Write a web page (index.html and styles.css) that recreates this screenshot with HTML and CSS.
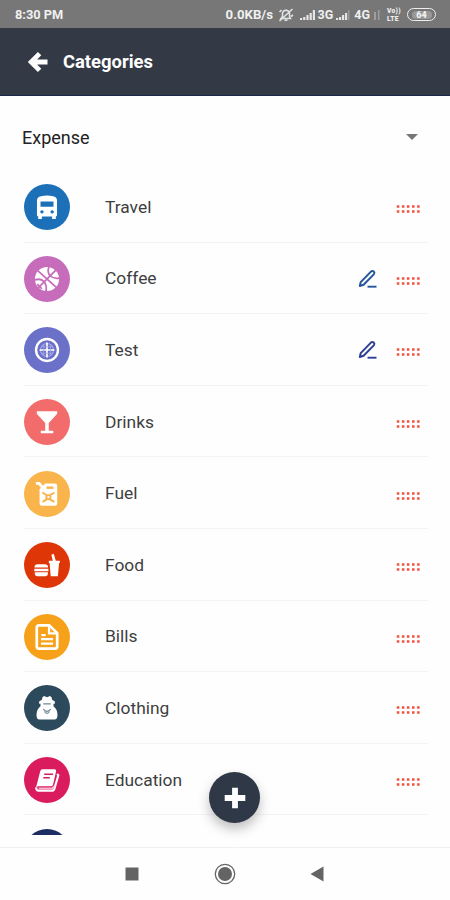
FILE: index.html
```html
<!DOCTYPE html>
<html lang="en">
<head>
    <meta charset="UTF-8">
    <meta name="viewport" content="width=device-width, initial-scale=1.0">
    <title>Categories</title>
    <link rel="stylesheet" href="styles.css">
</head>
<body>

    <!-- Shared symbols -->
    <svg class="symbols" width="0" height="0">
        <symbol id="grip" viewBox="0 0 24 8">
            <path fill="#f2503a" d="M.8.2h2.500v2.500H.8zM5.900.2h2.500v2.500H5.900zM10.900.2h2.500v2.500h-2.500zM16 .2h2.500v2.500H16zM21.100.2h2.500v2.500h-2.500zM.8 5.300h2.500v2.500H.8zM5.900 5.300h2.500v2.500H5.900zM10.900 5.300h2.500v2.500h-2.500zM16 5.300h2.500v2.500H16zM21.100 5.300h2.500v2.500h-2.500z"/>
        </symbol>
        <symbol id="pen" viewBox="0 0 20 20">
            <path d="M1.800 17l.9-3.900L13.200 2.400q1.300-1 2.500.1t.3 2.600L5.600 15.700z" fill="none" stroke="currentColor" stroke-width="2" stroke-linejoin="round"/>
            <path d="M9.500 17.700h9" stroke="currentColor" stroke-width="1.900"/>
        </symbol>
    </svg>

    <div class="phone">
        <!-- Status bar -->
        <div class="status-bar">
            <span class="time">8:30 PM</span>
            <div class="status-icons">
                <span class="speed">0.0KB/s</span>
                <svg class="bell" width="16" height="16" viewBox="0 0 16 16" fill="none" stroke="#e2e2e2" stroke-width="1.600">
                    <path d="M3 11.500h9.500l-1-2V6.200Q11 3.400 8 3.200 4.800 3.400 4.500 6.200v3.300zM6.500 13.300h3M1.500 14L14.500 2M1.500 5l2-2M13 9.500l2-1.500"/>
                </svg>
                <svg class="signal" width="16" height="12" viewBox="0 0 16 12" fill="#e6e6e6">
                    <path d="M0 9h2.200v2H0zM3.200 8h2.200v3H3.200zM6.400 6h2.200v5H6.400zM9.600 4h2.200v7H9.600zM12.800 1H15v10h-2.200z"/>
                </svg>
                <span>3G</span>
                <svg class="signal-two" width="15" height="12" viewBox="0 0 15 12" fill="#e6e6e6">
                    <path d="M0 9h2.200v2H0zM3 8h2.200v3H3zM6 6h2.200v5H6zM9 4h2.200v7H9z"/>
                    <path d="M12 1h1.500v10H12z" opacity=".3"/>
                </svg>
                <span class="lte">4G</span>
                <svg class="signal-off" width="8" height="12" viewBox="0 0 8 12" fill="#e6e6e6" opacity=".35">
                    <path d="M0 3h2v8H0zM4 1h1.500v10H4z"/>
                </svg>
                <span class="volte"><b>Vo))</b><b>LTE</b></span>
                <span class="battery"><b>64</b></span>
            </div>
        </div>

        <!-- Header -->
        <header class="header">
            <svg width="21" height="22" viewBox="0 0 21 22" fill="none" stroke="#fff" stroke-width="4.800">
                <path d="M12.600 2.600L4.200 11l8.400 8.400M5 11h15.500"/>
            </svg>
            <h1>Categories</h1>
        </header>

        <!-- Category type -->
        <div class="type-select">
            <span>Expense</span>
            <span class="caret"></span>
        </div>

        <!-- Category list -->
        <ul class="category-list">
            <li class="category">
                <span class="badge travel">
                    <svg viewBox="0 0 28 28">
                        <path fill="#fff" fill-rule="evenodd" d="M7.500 2.500Q14 .8 20.500 2.500 24.800 3.500 24.800 7V22.500q0 1.500-1.300 1.800v2.500h-4v-2.500h-11v2.500h-4v-2.500q-1.300-.3-1.300-1.800V7q0-3.500 4.300-4.500zM7 8v5.800h14V8zM8.500 17.500a1.800 1.800 0 1 0 .1 0zM19.500 17.500a1.800 1.800 0 1 0 .1 0z"/>
                    </svg>
                </span>
                <span class="name">Travel</span>
                <svg class="grip"><use href="#grip"/></svg>
            </li>
            <li class="category">
                <span class="badge coffee">
                    <svg viewBox="0 0 28 28">
                        <circle cx="14" cy="14" r="13" fill="#fff"/>
                        <path d="M4 5l20 18M23.500 4.500L4.500 23.500M16 1q-2 6 1.500 9.500T27 13M1 15q6-2 9.500 1.500T13 27M3.500 19.500l5 5" fill="none" stroke="#c66cba" stroke-width="1.900"/>
                    </svg>
                </span>
                <span class="name">Coffee</span>
                <svg class="pen"><use href="#pen"/></svg>
                <svg class="grip"><use href="#grip"/></svg>
            </li>
            <li class="category">
                <span class="badge test">
                    <svg viewBox="0 0 28 28" fill="none" stroke="#fff">
                        <circle cx="14" cy="14" r="11.800" stroke-width="2.600"/>
                        <circle cx="14" cy="14" r="7" stroke="#a5aae4" stroke-width="1.200"/>
                        <path d="M14 6v16M6 14h16" stroke-width="1.800"/>
                        <path d="M10.500 7.500v13M17.500 7.500v13M7.500 10.500h13M7.500 17.500h13" stroke="#a5aae4" stroke-width=".9"/>
                    </svg>
                </span>
                <span class="name">Test</span>
                <svg class="pen pen-dark"><use href="#pen"/></svg>
                <svg class="grip"><use href="#grip"/></svg>
            </li>
            <li class="category">
                <span class="badge drinks">
                    <svg viewBox="0 0 28 28">
                        <path fill="#fff" d="M3 2.500h22v2.600L15.900 15v8.500h4.800v2.700H7.300v-2.700h4.800V15L3 5.100z"/>
                    </svg>
                </span>
                <span class="name">Drinks</span>
                <svg class="grip"><use href="#grip"/></svg>
            </li>
            <li class="category">
                <span class="badge fuel">
                    <svg viewBox="0 0 28 28">
                        <path d="M2 2.500h3.500l4 5" fill="none" stroke="#fff" stroke-width="3"/>
                        <path fill="#fff" d="M12 2.800h10.500q2.500 0 2.500 2.500v18.900q0 2.500-2.500 2.500H8.500Q6 26.700 6 24.200V9z"/>
                        <path d="M13.500 7.200H21" stroke="#f9b54c" stroke-width="2.600"/>
                        <path d="M9 12.500q4 1.500 6.500 4.800 2.500-3.300 6.500-4.800M9 22.500q4-1.500 6.500-5.200 2.500 3.700 6.500 5.200" fill="none" stroke="#f9b54c" stroke-width="2.200"/>
                        <circle cx="15.500" cy="17.400" r="3.200" fill="#f9b54c"/>
                        <circle cx="15.500" cy="17.400" r="1.200" fill="#fff"/>
                    </svg>
                </span>
                <span class="name">Fuel</span>
                <svg class="grip"><use href="#grip"/></svg>
            </li>
            <li class="category">
                <span class="badge food">
                    <svg viewBox="0 0 28 28" fill="#fff">
                        <path d="M.5 16.800q0-3.500 3.500-3.500h7.500q3.700 0 3.700 3.500zM.3 18.100h15.200v2.500H.3zM.8 21.900H15v1.600q0 2.500-2.500 2.500H3.300q-2.500 0-2.500-2.500z"/>
                        <path d="M16 9.300h4.200L18.700 3l2.500-1.200 2.300 7.500h4.300v2.500h-.8L25.700 26.200H18l-1.200-14.400H16z"/>
                    </svg>
                </span>
                <span class="name">Food</span>
                <svg class="grip"><use href="#grip"/></svg>
            </li>
            <li class="category">
                <span class="badge bills">
                    <svg viewBox="0 0 28 28" fill="none" stroke="#fff" stroke-width="2.900">
                        <path d="M16.500 1.500H5.500q-2.500 0-2.500 2.500v20.300q0 2.300 2.500 2.300h17q2.500 0 2.500-2.300V9.800z" stroke-linejoin="round"/>
                        <path d="M16.200 2v8.200h8.500M8 12h4.500M7.500 16.400h13M7.500 21.200h13" stroke-width="2.400"/>
                    </svg>
                </span>
                <span class="name">Bills</span>
                <svg class="grip"><use href="#grip"/></svg>
            </li>
            <li class="category">
                <span class="badge clothing">
                    <svg viewBox="0 0 28 28" fill="#fff">
                        <path d="M8.500 5q0-3.200 2.300-4l3.200 1.300L17.200 1q2.300.8 2.300 4l3 2v2.500h-17V7zM7 9.500h14v2.700q4.300 3.300 4.300 9.300 0 5-3.300 5H6q-3.300 0-3.300-5 0-6 4.300-9.300z"/>
                        <path d="M10 15.300q4 4.500 8 0M11.300 17.800q2.700 4 5.400 0M10 9.600h8" fill="none" stroke="#6f8491" stroke-width="1.300"/>
                    </svg>
                </span>
                <span class="name">Clothing</span>
                <svg class="grip"><use href="#grip"/></svg>
            </li>
            <li class="category">
                <span class="badge education">
                    <svg viewBox="0 0 28 28" fill="#fff">
                        <path d="M9 2.500h13q2.300 0 1.800 2.200L20.500 19q-.5 1.800-2.300 1.800H5.500q-1.800 0-3.300 1.200L6.700 4.500q.5-2 2.300-2z"/>
                        <path d="M24.800 7.500l1.400 1.500-4.200 14.300q-.6 2.200-2.800 2.200H5q-2.800 0-2.600-3.500" fill="none" stroke="#fff" stroke-width="2.300"/>
                        <path d="M5 23h13.500q2.500 0 3.100-2.500" fill="none" stroke="#f6b8cf" stroke-width="1.800"/>
                        <path d="M11 7.800h9.500M10 11.500h7" stroke="#da1b5d" stroke-width="1.700"/>
                    </svg>
                </span>
                <span class="name">Education</span>
                <svg class="grip"><use href="#grip"/></svg>
            </li>
            <li class="category">
                <span class="badge next"></span>
            </li>
        </ul>

        <!-- Add button -->
        <button class="add-btn" aria-label="Add category">
            <svg width="22" height="22" viewBox="0 0 22 22" stroke="#fff" stroke-width="5.800">
                <path d="M11 .7v20.600M.7 11h20.600"/>
            </svg>
        </button>

        <!-- Navigation bar -->
        <nav class="nav-bar">
            <svg width="14" height="14" viewBox="0 0 14 14"><path fill="#646464" d="M.5.5h13v13H.5z"/></svg>
            <svg width="22" height="22" viewBox="0 0 22 22">
                <circle cx="11" cy="11" r="9.700" fill="none" stroke="#646464" stroke-width="1.300"/>
                <circle cx="11" cy="11" r="7" fill="#646464"/>
            </svg>
            <svg width="14" height="16" viewBox="0 0 14 16"><path fill="#646464" d="M.5 8L13.500.5v15z"/></svg>
        </nav>
    </div>

</body>
</html>
```
FILE: styles.css
```css
* {
    box-sizing: border-box;
}

body {
    font-family: Roboto, sans-serif;
    margin: 0;
    padding: 0;
    background-color: #fefefe;
}

.symbols {
    position: absolute;
}

.phone {
    position: relative;
    display: flex;
    flex-direction: column;
    width: 450px;
    height: 900px;
    overflow: hidden;
}

/* Status bar */
.status-bar {
    display: flex;
    justify-content: space-between;
    align-items: center;
    height: 28px;
    padding: 1px 14px 0 15px;
    background-color: #777;
    color: #f0f0f0;
    font-size: 12.5px;
    font-weight: 700;
}

.time {
    font-size: 12.8px;
}

.speed {
    width: 50px;
    font-size: 13.2px;
    white-space: nowrap;
}

.status-icons {
    display: flex;
    align-items: center;
}

.bell {
    margin: 0 6px 0 2px;
}

.signal {
    margin-right: 2px;
}

.signal-two {
    margin: 0 3px;
}

.signal-off {
    margin: 0 5px 0 4px;
}

.volte {
    display: flex;
    flex-direction: column;
    width: 15px;
    margin-right: 5px;
    font-size: 6.6px;
    line-height: 8px;
    letter-spacing: 0.3px;
}

.battery {
    display: flex;
    justify-content: center;
    align-items: center;
    width: 29px;
    height: 13px;
    border: 1.5px solid #eee;
    border-radius: 7px;
    font-size: 9px;
}

.battery b {
    width: 20px;
    border-radius: 4px;
    background-color: #999;
    line-height: 8px;
    text-align: center;
}

/* Header */
.header {
    display: flex;
    align-items: center;
    gap: 15px;
    height: 68px;
    padding-left: 27px;
    background-color: #333a46;
    border-bottom: 1px solid #16294a;
    color: #fff;
}

.header h1 {
    margin: 0;
    font-size: 18.4px;
    font-weight: 700;
}

/* Category type */
.type-select {
    display: flex;
    justify-content: space-between;
    align-items: flex-start;
    height: 75px;
    padding: 31px 32px 0 22px;
    color: #222;
    font-size: 18px;
    line-height: 21px;
}

.caret {
    margin-top: 7px;
    border-left: 6px solid transparent;
    border-right: 6px solid transparent;
    border-top: 6px solid #777;
}

/* Category list */
.category-list {
    height: 664px;
    margin: 0 22px 0 24px;
    padding: 0;
    overflow: hidden;
    list-style: none;
}

.category {
    display: flex;
    align-items: center;
    height: 71.6px;
    padding: 2px 8px 0 0;
    border-bottom: 1px solid #f3f3f3;
}

.badge {
    display: flex;
    justify-content: center;
    align-items: center;
    width: 46px;
    height: 46px;
    margin-right: 35px;
    border-radius: 50%;
}

.badge svg {
    width: 26px;
    height: 26px;
}

.travel { background-color: #1c70b8; }
.coffee { background-color: #c66cba; }
.test { background-color: #6b70c8; }
.drinks { background-color: #f36c6c; }
.fuel { background-color: #f9b54c; }
.food { background-color: #df3608; }
.bills { background-color: #f7a11b; }
.clothing { background-color: #2d4a5d; }
.education { background-color: #da1b5d; }
.next { background-color: #1d2c63; }

.name {
    flex: 1;
    margin-top: -1px;
    color: #3e3e3e;
    font-size: 17.4px;
}

.pen {
    width: 20px;
    height: 20px;
    margin-right: 18px;
    color: #24569c;
}

.pen-dark {
    color: #2e3f96;
}

.grip {
    width: 24px;
    height: 8px;
    margin-top: 4px;
}

/* Add button */
.add-btn {
    position: absolute;
    left: 209px;
    top: 772px;
    display: flex;
    justify-content: center;
    align-items: center;
    width: 51px;
    height: 51px;
    padding: 0;
    border: none;
    border-radius: 50%;
    background-color: #2f3846;
    box-shadow: 0 6px 12px rgba(0, 0, 0, 0.25);
}

/* Navigation bar */
.nav-bar {
    display: flex;
    justify-content: space-between;
    align-items: center;
    height: 53px;
    margin-top: auto;
    padding: 0 126px 0 125px;
    border-top: 1px solid #f1f1f1;
}
```
